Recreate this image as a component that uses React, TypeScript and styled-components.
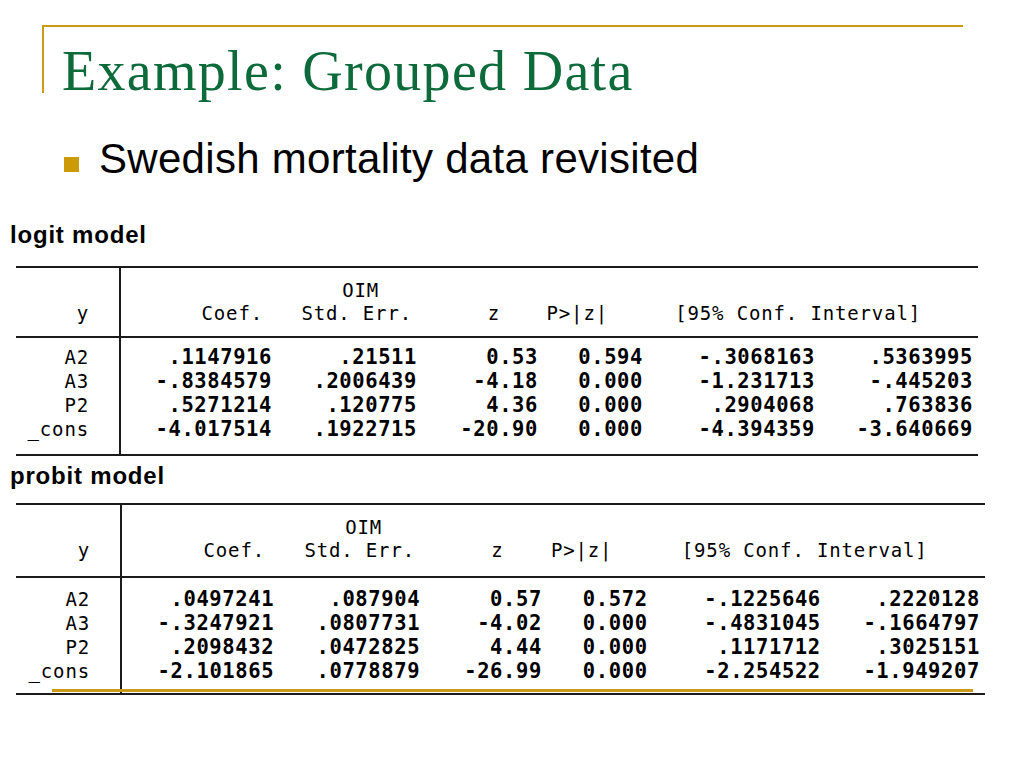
import React from "react";
import styled, { createGlobalStyle } from "styled-components";

const Global = createGlobalStyle`
  html, body { margin: 0; padding: 0; background: #fff; }
  #root { width: 1024px; height: 768px; }
`;

const GOLD = "#cc9a1a";
const INK = "#1b1b1b";

const Slide = styled.div`
  position: relative;
  box-sizing: border-box;
  width: 1024px;
  height: 768px;
  overflow: hidden;
  background: #fff;
  padding-top: 25px;
`;

const TitleFrame = styled.header`
  box-sizing: border-box;
  margin-left: 42px;
  width: 921px;
  height: 68px;
  border-top: 2px solid ${GOLD};
  border-left: 2px solid ${GOLD};
  padding: 12px 0 0 18px;
`;

const Title = styled.h1`
  margin: 0;
  font-family: "Liberation Serif", "Times New Roman", serif;
  font-weight: normal;
  font-size: 56px;
  line-height: 64px;
  letter-spacing: 1.3px;
  color: #0d6b3b;
  white-space: nowrap;
`;

const Bullet = styled.div`
  display: flex;
  align-items: flex-start;
  margin-top: 42px;
  padding-left: 64px;
`;

const Square = styled.span`
  flex: none;
  width: 15px;
  height: 15px;
  margin-top: 22px;
  margin-right: 20px;
  background: #cc9a06;
`;

const BulletText = styled.p`
  margin: 0;
  font-family: "Liberation Sans", Arial, sans-serif;
  font-size: 42px;
  line-height: 48px;
  letter-spacing: 0.3px;
  color: #000;
  white-space: nowrap;
`;

const Section = styled.section<{ $top: number }>`
  margin-top: ${(p) => p.$top}px;
  margin-left: 10px;
`;

const ModelLabel = styled.h2`
  margin: 0;
  font-family: "Liberation Sans", Arial, sans-serif;
  font-weight: bold;
  font-size: 24px;
  line-height: 26px;
  letter-spacing: 0.8px;
  color: #000;
`;

const Table = styled.div<{ $top: number; $w: number }>`
  margin-top: ${(p) => p.$top}px;
  margin-left: 6px;
  width: ${(p) => p.$w}px;
  border-top: 2px solid ${INK};
  font-family: "DejaVu Sans Mono", "Liberation Mono", monospace;
  font-size: 19px;
  letter-spacing: 0.85px;
  color: #000;
`;

const Block = styled.div<{ $label: number }>`
  display: grid;
  grid-template-columns: ${(p) => p.$label}px 1fr;
  border-bottom: 2px solid ${INK};
`;

const LabelCol = styled.div<{ $pt: number; $pb: number }>`
  box-sizing: border-box;
  border-right: 2px solid ${INK};
  padding: ${(p) => p.$pt}px 30px ${(p) => p.$pb}px 0;
  text-align: right;
`;

const DataCol = styled.div<{ $pt: number; $pb: number }>`
  padding: ${(p) => p.$pt}px 0 ${(p) => p.$pb}px 0;
`;

const LabelCell = styled.div<{ $h: number }>`
  height: ${(p) => p.$h}px;
  line-height: ${(p) => p.$h}px;
  white-space: pre;
`;

const Line = styled.div<{ $cols: string; $h: number; $bold?: boolean }>`
  display: grid;
  grid-template-columns: ${(p) => p.$cols};
  height: ${(p) => p.$h}px;
  line-height: ${(p) => p.$h}px;
  font-weight: ${(p) => (p.$bold ? 700 : 400)};
  font-size: ${(p) => (p.$bold ? "20.5px" : "19px")};
  letter-spacing: ${(p) => (p.$bold ? "0.6px" : "0.85px")};
  white-space: pre;
`;

const Cell = styled.span<{ $pr?: number }>`
  text-align: right;
  padding-right: ${(p) => p.$pr ?? 0}px;
`;

const FooterRule = styled.div`
  position: absolute;
  left: 52px;
  top: 689px;
  width: 921px;
  height: 3px;
  background: ${GOLD};
`;

const HEAD = [142, 149, 88, 108, 313];
const BODY = [151, 145, 121, 105, 172, 158];
const cols = (w: number[], k: number) => w.map((v) => `${(v * k).toFixed(1)}px`).join(" ");

type Model = {
  name: string;
  k: number;
  top: number;
  tableTop: number;
  head: [number, number];
  body: [number, number];
  rowH: number;
  rows: { label: string; vals: string[] }[];
};

const models: Model[] = [
  {
    name: "logit model",
    k: 1,
    top: 39,
    tableTop: 18,
    head: [11, 11],
    body: [7, 13],
    rowH: 24,
    rows: [
      { label: "A2", vals: [".1147916", ".21511", "0.53", "0.594", "-.3068163", ".5363995"] },
      { label: "A3", vals: ["-.8384579", ".2006439", "-4.18", "0.000", "-1.231713", "-.445203"] },
      { label: "P2", vals: [".5271214", ".120775", "4.36", "0.000", ".2904068", ".763836"] },
      { label: "_cons", vals: ["-4.017514", ".1922715", "-20.90", "0.000", "-4.394359", "-3.640669"] },
    ],
  },
  {
    name: "probit model",
    k: 1.007,
    top: 7,
    tableTop: 14,
    head: [11, 14],
    body: [9, 10],
    rowH: 24,
    rows: [
      { label: "A2", vals: [".0497241", ".087904", "0.57", "0.572", "-.1225646", ".2220128"] },
      { label: "A3", vals: ["-.3247921", ".0807731", "-4.02", "0.000", "-.4831045", "-.1664797"] },
      { label: "P2", vals: [".2098432", ".0472825", "4.44", "0.000", ".1171712", ".3025151"] },
      { label: "_cons", vals: ["-2.101865", ".0778879", "-26.99", "0.000", "-2.254522", "-1.949207"] },
    ],
  },
];

function ModelTable({ m }: { m: Model }) {
  const label = Math.round(105 * m.k);
  return (
    <Section $top={m.top}>
      <ModelLabel>{m.name}</ModelLabel>
      <Table $top={m.tableTop} $w={962 * m.k}>
        <Block $label={label}>
          <LabelCol $pt={m.head[0]} $pb={m.head[1]}>
            <LabelCell $h={23}> </LabelCell>
            <LabelCell $h={23}>y</LabelCell>
          </LabelCol>
          <DataCol $pt={m.head[0]} $pb={m.head[1]}>
            <Line $cols={cols(HEAD, m.k)} $h={23}>
              <Cell />
              <Cell $pr={33}>OIM</Cell>
            </Line>
            <Line $cols={cols(HEAD, m.k)} $h={23}>
              <Cell>Coef.</Cell>
              <Cell>Std. Err.</Cell>
              <Cell>z</Cell>
              <Cell>P&gt;|z|</Cell>
              <Cell>[95% Conf. Interval]</Cell>
            </Line>
          </DataCol>
        </Block>
        <Block $label={label}>
          <LabelCol $pt={m.body[0]} $pb={m.body[1]}>
            {m.rows.map((r) => (
              <LabelCell key={r.label} $h={m.rowH}>
                {r.label}
              </LabelCell>
            ))}
          </LabelCol>
          <DataCol $pt={m.body[0]} $pb={m.body[1]}>
            {m.rows.map((r) => (
              <Line key={r.label} $cols={cols(BODY, m.k)} $h={m.rowH} $bold>
                {r.vals.map((v, i) => (
                  <Cell key={i}>{v}</Cell>
                ))}
              </Line>
            ))}
          </DataCol>
        </Block>
      </Table>
    </Section>
  );
}

export default function App() {
  return (
    <>
      <Global />
      <Slide>
        <TitleFrame>
          <Title>Example: Grouped Data</Title>
        </TitleFrame>
        <Bullet>
          <Square />
          <BulletText>Swedish mortality data revisited</BulletText>
        </Bullet>
        {models.map((m) => (
          <ModelTable key={m.name} m={m} />
        ))}
        <FooterRule />
      </Slide>
    </>
  );
}
